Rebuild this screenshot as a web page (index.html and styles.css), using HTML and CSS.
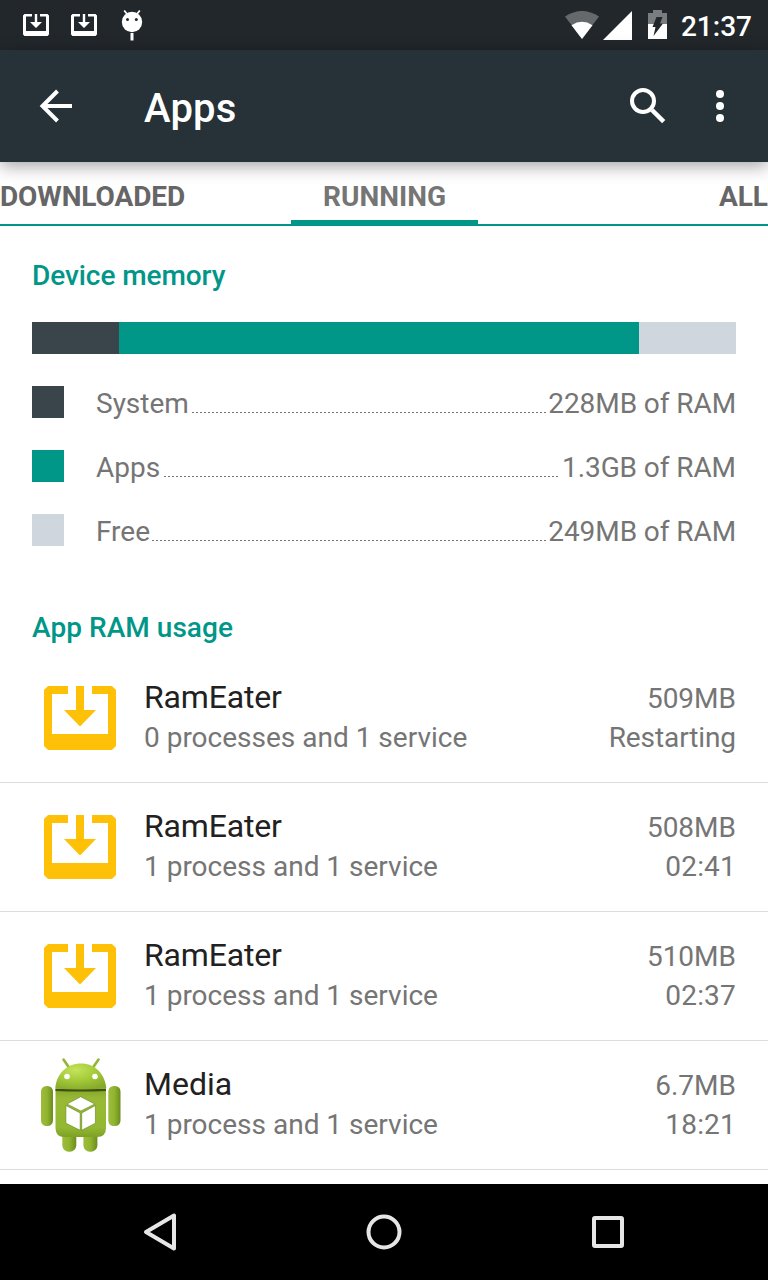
FILE: index.html
```html
<!DOCTYPE html>
<html lang="en">
<head>
<meta charset="utf-8">
<title>Apps</title>
<link rel="stylesheet" href="styles.css">
</head>
<body>
<svg class="defs" width="0" height="0" aria-hidden="true">
  <symbol id="download" viewBox="0 0 72 64">
    <path d="M4 0H24V8H8V48H64V8H48V0H68L72 4V60L68 64H4L0 60V4Z"/>
    <path d="M32 0H40V24H52L36.500 40H35.500L20 24H32Z"/>
  </symbol>
</svg>
<div class="screen">
  <div class="status">
    <div class="notes">
      <svg class="note" width="26" height="22" preserveAspectRatio="none" viewBox="0 0 26 22"><path d="M1.500 0H9V2.500H3V17H23V2.500H17V0H24.500L26 1.500V20.500L24.500 22H1.500L0 20.500V1.500Z"/><path d="M11.800 0H14.200V8H19L13 14L7 8H11.800Z"/></svg>
      <svg class="note" width="26" height="22" viewBox="0 0 26 22"><path d="M1.500 0H9V2.500H3V17H23V2.500H17V0H24.500L26 1.500V20.500L24.500 22H1.500L0 20.500V1.500Z"/><path d="M11.800 0H14.200V8H19L13 14L7 8H11.800Z"/></svg>
      <svg class="bug" width="22" height="32" viewBox="0 0 22 32">
        <path d="M3.200 1.500L6 5M18.800 1.500L16 5" stroke="#fff" stroke-width="1.800" fill="none"/>
        <circle cx="11" cy="13" r="10.200" fill="#fff"/>
        <circle cx="6.500" cy="10.400" r="1.500" fill="#22272b"/><circle cx="15.300" cy="10.400" r="1.500" fill="#22272b"/>
        <path d="M9.500 24h3v7.500h-3z" fill="#fff"/>
      </svg>
    </div>
    <div class="system">
      <svg width="36" height="30" viewBox="0 0 36 30">
        <path d="M1 6.500Q18-4.500 35 6.500L18 29Z" fill="#66696b"/>
        <path d="M7.500 15.200Q18 8.500 28.500 15.200L18 29Z" fill="#fff"/>
      </svg>
      <svg class="signal" width="29" height="29" viewBox="0 0 29 29"><path d="M29 0V29H0Z" fill="#fff"/></svg>
      <svg class="battery" width="19" height="29" viewBox="0 0 19 29">
        <path d="M5 0H14V3H19V14H0V3H5Z" fill="#7a7d7f"/>
        <path d="M0 14H19V29H0Z" fill="#fff"/>
        <path d="M8.500 7H14.500L12 13.500H15L5.500 26L7.500 17H4.500Z" fill="#22272b"/>
      </svg>
      <span class="clock">21:37</span>
    </div>
  </div>
  <header class="appbar">
    <svg class="back" width="34" height="34" viewBox="0 0 34 34" fill="none" stroke="#fff" stroke-width="4"><path d="M18.500 2L3.500 17L18.500 32M3.500 17H33"/></svg>
    <h1 class="title">Apps</h1>
    <svg class="search" width="36" height="36" viewBox="0 0 36 36" fill="none" stroke="#fff" stroke-width="4"><circle cx="13" cy="13" r="11"/><path d="M22 22L33.700 33.700" stroke-width="4.500"/></svg>
    <svg class="more" width="8" height="32" viewBox="0 0 8 32" fill="#fff"><circle cx="4" cy="4" r="4"/><circle cx="4" cy="16" r="4"/><circle cx="4" cy="28" r="4"/></svg>
  </header>
  <nav class="tabs">
    <span class="tab first">DOWNLOADED</span>
    <span class="tab active">RUNNING</span>
    <span class="tab last">ALL</span>
  </nav>
  <main class="content">
    <h2 class="heading memory">Device memory</h2>
    <div class="meter"><i class="sys"></i><i class="app"></i><i class="free"></i></div>
    <div class="legend">
      <div class="entry"><i class="swatch sys"></i><span>System</span><i class="dots"></i><span class="amount">228MB of RAM</span></div>
      <div class="entry"><i class="swatch app"></i><span>Apps</span><i class="dots wide"></i><span class="amount">1.3GB of RAM</span></div>
      <div class="entry"><i class="swatch free"></i><span>Free</span><i class="dots near"></i><span class="amount">249MB of RAM</span></div>
    </div>
    <h2 class="heading usage">App RAM usage</h2>
    <div class="list">
      <div class="row">
        <svg class="icon" width="72" height="64"><use href="#download"/></svg>
        <div class="info"><div class="name">RamEater</div><div class="detail">0 processes and 1 service</div></div>
        <div class="stat"><div>509MB</div><div class="state">Restarting</div></div>
      </div>
      <div class="row">
        <svg class="icon" width="72" height="64"><use href="#download"/></svg>
        <div class="info"><div class="name">RamEater</div><div class="detail">1 process and 1 service</div></div>
        <div class="stat"><div>508MB</div><div class="time">02:41</div></div>
      </div>
      <div class="row">
        <svg class="icon" width="72" height="64"><use href="#download"/></svg>
        <div class="info"><div class="name">RamEater</div><div class="detail">1 process and 1 service</div></div>
        <div class="stat"><div>510MB</div><div class="time">02:37</div></div>
      </div>
      <div class="row">
        <svg class="robot" width="82" height="96" viewBox="0 0 82 96">
          <defs>
            <linearGradient id="body" x2="0" y2="1"><stop offset="0" stop-color="#86a52a"/><stop offset=".2" stop-color="#98b935"/><stop offset=".8" stop-color="#94b832"/><stop offset="1" stop-color="#7da026"/></linearGradient>
            <linearGradient id="limb"><stop offset="0" stop-color="#9cbd3c"/><stop offset=".5" stop-color="#91b42f"/><stop offset="1" stop-color="#6b8c1f"/></linearGradient>
            <radialGradient id="head" cx=".4" cy=".25" r=".8"><stop offset="0" stop-color="#c3e35c"/><stop offset=".5" stop-color="#a4cb39"/><stop offset="1" stop-color="#86a92a"/></radialGradient>
          </defs>
          <path d="M23.500 2.500L30 12M58.500 2.500L52 12" stroke="#93b532" stroke-width="2.600" stroke-linecap="round"/>
          <rect x="22.300" y="68" width="14" height="26.700" rx="6.500" fill="url(#limb)"/>
          <rect x="43.400" y="68" width="14" height="26.700" rx="6.500" fill="url(#limb)"/>
          <rect x="1" y="29" width="12" height="40" rx="5.500" fill="url(#limb)"/>
          <rect x="68.300" y="29" width="12.200" height="40" rx="5.500" fill="url(#limb)"/>
          <path d="M15.500 32H66V71Q66 80 57 80H24.500Q15.500 80 15.500 71Z" fill="url(#body)"/>
          <path d="M15.500 31.500H66V34Q41 35 15.500 34Z" fill="#3d5210"/>
          <path d="M15.300 31.500C16 17 27 6.500 41 6.500S65 17 66.300 31.500Q40 33.500 15.300 31.500Z" fill="url(#head)"/>
          <circle cx="27" cy="19.500" r="2.800" fill="#fff"/><circle cx="55" cy="19.500" r="2.800" fill="#fff"/>
          <g fill="#fff" stroke="#64841c" stroke-width=".6"><path d="M40.700 39.700L54.800 47L40.900 54L27 47Z"/><path d="M25.900 48.500L40.200 56V73.300L25.900 66.200Z"/><path d="M41.700 56L55.400 48.500V66.200L41.700 73.300Z"/></g>
        </svg>
        <div class="info"><div class="name media">Media</div><div class="detail">1 process and 1 service</div></div>
        <div class="stat"><div>6.7MB</div><div class="time">18:21</div></div>
      </div>
    </div>
  </main>
  <footer class="navbar">
    <svg width="38" height="40" viewBox="0 0 38 40"><path d="M5 20L33 3.500V36.500Z"/></svg>
    <svg width="38" height="40" viewBox="0 0 38 40"><circle cx="19" cy="20" r="15.500"/></svg>
    <svg width="38" height="40" viewBox="0 0 38 40"><rect x="5" y="6" width="28" height="28" rx="1"/></svg>
  </footer>
</div>
</body>
</html>
```

FILE: styles.css
```css
* { box-sizing: border-box; }
body { margin: 0; font-family: Roboto, sans-serif; font-size: 28px; color: #757575; background: #fff; }
h1, h2 { margin: 0; font-weight: 500; }
svg { display: block; flex: none; }
.defs { position: absolute; }
.screen { width: 768px; height: 1280px; display: flex; flex-direction: column; overflow: hidden; }

.status { height: 50px; flex: none; background: #22272b; display: flex; justify-content: space-between; }
.notes { display: flex; gap: 22px; padding: 14px 0 0 23px; fill: #fff; }
.bug { margin: -5px 0 0 2px; }
.system { display: flex; align-items: flex-start; padding: 10px 16px 0 0; }
.signal { margin: 1px 0 0 3px; }
.battery { margin: 0 0 0 16px; }
.clock { margin-left: 14px; color: #fff; font-weight: 500; line-height: 34px; }

.appbar { height: 112px; flex: none; position: relative; background: #263238; display: flex; align-items: center; padding: 0 44px 0 39px; box-shadow: 0 4px 16px rgba(0,0,0,.36); }
.title { flex: 1; margin: 6px 0 0 71px; color: #fff; font-size: 40px; line-height: 48px; letter-spacing: .2px; }
.more { margin-left: 50px; }

.tabs { height: 64px; flex: none; display: flex; justify-content: space-between; border-bottom: 2px solid #009688; font-weight: 700; line-height: 70px; color: #666; }
.tab { width: 187px; height: 64px; }
.tab.first { letter-spacing: -.1px; }
.tab.active { margin-left: 104px; color: #757575; text-align: center; border-bottom: 6px solid #009688; }
.tab.last { flex: 1; text-align: right; }

.content { flex: 1; min-height: 0; overflow: hidden; padding-top: 32px; }
.heading { margin-left: 32px; font-size: 28px; line-height: 36px; color: #009688; }
.memory { letter-spacing: -.07px; }
.meter { display: flex; height: 32px; margin: 28px 32px 32px; }
.meter .sys { width: 87px; }
.meter .app { width: 520px; }
.meter .free { width: 97px; }
.sys { background: #3a444b; }
.app { background: #009688; }
.free { background: #cfd6dd; }
.legend { display: grid; gap: 32px; padding: 0 32px; }
.entry { display: flex; height: 32px; line-height: 35px; white-space: nowrap; }
.amount { letter-spacing: -.08px; }
.swatch { width: 32px; height: 32px; margin-right: 32px; }
.dots { flex: 1; height: 1px; margin: 26px 1px 0 3px; background: repeating-linear-gradient(90deg, #757575 0 2px, transparent 2px 4px); }
.dots.wide { margin-right: 3px; margin-left: 4px; }
.dots.near { margin-left: 2px; }
.usage { margin-top: 64px; letter-spacing: .05px; }

.list { margin-top: 8px; }
.row { height: 129px; display: flex; align-items: flex-start; padding: 23px 32px 0 44px; border-bottom: 1px solid #dcdcdc; }
.icon { margin-top: 9px; fill: #ffc107; }
.info { margin-left: 28px; flex: 1; }
.name { color: #212121; font-size: 32px; line-height: 40px; letter-spacing: -.18px; }
.name.media { letter-spacing: 0; }
.detail { margin-top: 1px; line-height: 40px; }
.stat { text-align: right; line-height: 39px; padding-top: 2px; }
.state { letter-spacing: -.1px; }
.time { letter-spacing: .2px; }
.robot { margin: -7px -6px 0 -4px; }

.navbar { height: 96px; flex: none; background: #000; display: flex; align-items: center; justify-content: space-between; padding: 0 141px; fill: none; stroke: #e6e6e6; stroke-width: 4; stroke-linejoin: round; }
```
